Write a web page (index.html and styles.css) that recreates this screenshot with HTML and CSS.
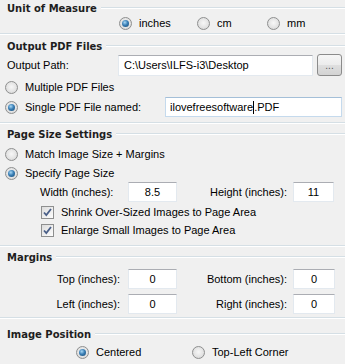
FILE: index.html
```html
<!DOCTYPE html>
<html lang="en">
  <head>
    <meta charset="UTF-8" />
    <title>PDF Options</title>
    <link rel="stylesheet" href="styles.css">
  </head>
  <body>
    <section class="group unit">
      <div class="group-title"><span>Unit of Measure</span></div>
      <div class="unit-row">
        <label class="option"><span class="radio checked"></span>inches</label>
        <label class="option"><span class="radio"></span>cm</label>
        <label class="option"><span class="radio"></span>mm</label>
      </div>
    </section>

    <section class="group output">
      <div class="group-title"><span>Output PDF Files</span></div>
      <div class="path-row">
        <span class="path-label">Output Path:</span>
        <div class="field path-field">C:\Users\ILFS-i3\Desktop</div>
        <button class="browse">...</button>
      </div>
      <label class="option multiple"><span class="radio"></span>Multiple PDF Files</label>
      <div class="single-row">
        <label class="option"><span class="radio checked"></span>Single PDF File named:</label>
        <div class="field name-field">ilovefreesoftware<span class="caret"></span>.PDF</div>
      </div>
    </section>

    <section class="group page-size">
      <div class="group-title"><span>Page Size Settings</span></div>
      <label class="option match"><span class="radio"></span>Match Image Size + Margins</label>
      <label class="option specify"><span class="radio checked"></span>Specify Page Size</label>
      <div class="size-row">
        <span class="size-label">Width (inches):</span>
        <div class="field num">8.5</div>
        <span class="size-label height-label">Height (inches):</span>
        <div class="field num">11</div>
      </div>
      <label class="check-option shrink"><span class="checkbox"><svg viewBox="0 0 11 11" width="11" height="11"><path d="M2 5.5 L4.3 8 L9 2" fill="none" stroke="#4a5f88" stroke-width="1.8"/></svg></span>Shrink Over-Sized Images to Page Area</label>
      <label class="check-option enlarge"><span class="checkbox"><svg viewBox="0 0 11 11" width="11" height="11"><path d="M2 5.5 L4.3 8 L9 2" fill="none" stroke="#4a5f88" stroke-width="1.8"/></svg></span>Enlarge Small Images to Page Area</label>
    </section>

    <section class="group margins">
      <div class="group-title"><span>Margins</span></div>
      <div class="margin-row">
        <span class="margin-label">Top (inches):</span>
        <div class="field num">0</div>
        <span class="margin-label">Bottom (inches):</span>
        <div class="field num wide">0</div>
      </div>
      <div class="margin-row second">
        <span class="margin-label">Left (inches):</span>
        <div class="field num">0</div>
        <span class="margin-label">Right (inches):</span>
        <div class="field num wide">0</div>
      </div>
    </section>

    <section class="group position">
      <div class="group-title"><span>Image Position</span></div>
      <div class="position-row">
        <label class="option"><span class="radio checked"></span>Centered</label>
        <label class="option"><span class="radio"></span>Top-Left Corner</label>
      </div>
    </section>
  </body>
</html>
```

FILE: styles.css
```css
* {
  box-sizing: border-box;
}
body {
  margin: 0;
  width: 345px;
  height: 364px;
  overflow: hidden;
  background-color: #f0f0f0;
  font-family: "Liberation Sans", Arial, sans-serif;
  font-size: 11px;
  color: #000;
}

.group {
  border-bottom: 1px solid #d5dfe5;
  box-shadow: 0 1px 0 #ffffff;
  margin-bottom: 1px;
}

.group-title {
  display: flex;
  align-items: center;
  height: 16px;
  padding-left: 7px;
  font-family: "DejaVu Sans", Verdana, sans-serif;
  font-weight: bold;
  font-size: 10px;
  color: #1e1e1e;
}
.group-title::after {
  content: "";
  flex: 1;
  margin-left: 4px;
  border-top: 1px solid #d5dfe5;
  border-bottom: 1px solid #ffffff;
}

.option,
.check-option {
  display: flex;
  align-items: center;
  height: 14px;
  white-space: nowrap;
}

.radio {
  width: 13px;
  height: 13px;
  margin-right: 7px;
  border: 1px solid #8e8f8f;
  border-radius: 50%;
  background: radial-gradient(circle at 50% 45%, #f7f7f7 0%, #e4e4e4 55%, #cfcfcf 100%);
  display: flex;
  align-items: center;
  justify-content: center;
  flex-shrink: 0;
}
.radio.checked::after {
  content: "";
  width: 7px;
  height: 7px;
  border-radius: 50%;
  background: radial-gradient(circle at 40% 35%, #a8d8f5 0%, #3a7fb6 45%, #17476f 100%);
}

.checkbox {
  width: 13px;
  height: 13px;
  margin-right: 7px;
  border: 1px solid #8e8f8f;
  background: linear-gradient(135deg, #dcdcdc, #fdfdfd);
  display: flex;
  align-items: center;
  justify-content: center;
  flex-shrink: 0;
}

.field {
  height: 20px;
  background-color: #ffffff;
  border: 1px solid #e3e9ef;
  border-top-color: #abadb3;
  display: flex;
  align-items: center;
  padding-left: 5px;
}
.field.num {
  width: 49px;
  justify-content: center;
  padding-left: 0;
}
.field.num.wide {
  width: 42px;
}

/* unit of measure */
.unit-row {
  display: grid;
  grid-template-columns: 78px 70px auto;
  padding-left: 119px;
  margin-bottom: 3px;
}

/* output */
.output .group-title {
  margin-top: 4px;
}
.path-row {
  display: flex;
  align-items: center;
  height: 22px;
  padding-left: 7px;
}
.path-label {
  width: 111px;
}
.path-field {
  width: 195px;
  height: 21px;
}
.browse {
  all: unset;
  margin-left: 4px;
  width: 25px;
  height: 22px;
  border: 1px solid #8b8b8b;
  border-radius: 3px;
  background: linear-gradient(#f6f6f6 0%, #ececec 50%, #dfdfdf 51%, #d3d3d3 100%);
  color: #5a5a5a;
  font-size: 10px;
  text-align: center;
  line-height: 22px;
  box-sizing: border-box;
}
.multiple {
  margin-top: 4px;
  padding-left: 5px;
}
.single-row {
  display: flex;
  align-items: center;
  margin-top: 3px;
  margin-bottom: 5px;
  padding-left: 5px;
}
.single-row .option {
  width: 160px;
}
.name-field {
  width: 177px;
  border-color: #c5daed;
  border-top-color: #a4bfd8;
  padding-left: 4px;
}
.caret {
  width: 1px;
  height: 13px;
  background-color: #000;
}

/* page size */
.page-size .group-title {
  margin-top: 3px;
}
.match {
  margin-top: 5px;
  padding-left: 5px;
}
.specify {
  margin-top: 5px;
  padding-left: 5px;
}
.size-row {
  display: flex;
  align-items: center;
  margin-top: 2px;
  padding-left: 40px;
}
.size-label {
  width: 88px;
}
.size-label.height-label {
  width: 83px;
  margin-left: 33px;
}
.size-row .field.num:last-child {
  width: 41px;
}
.check-option {
  padding-left: 41px;
}
.shrink {
  margin-top: 3px;
}
.enlarge {
  margin-top: 4px;
  margin-bottom: 8px;
}

/* margins */
.margins .group-title {
  margin-top: 3px;
}
.margin-row {
  display: flex;
  align-items: center;
  margin-top: 4px;
}
.margin-row.second {
  margin-top: 5px;
  margin-bottom: 3px;
}
.margin-label {
  width: 120px;
  text-align: right;
  margin-right: 8px;
}
.margin-row .field + .margin-label {
  width: 110px;
  margin-right: 6px;
}

/* position */
.position .group-title {
  margin-top: 8px;
}
.position-row {
  display: grid;
  grid-template-columns: 116px auto;
  padding-left: 76px;
  margin-top: 3px;
  padding-bottom: 6px;
}
.position {
  border-bottom: none;
  box-shadow: none;
}
```
